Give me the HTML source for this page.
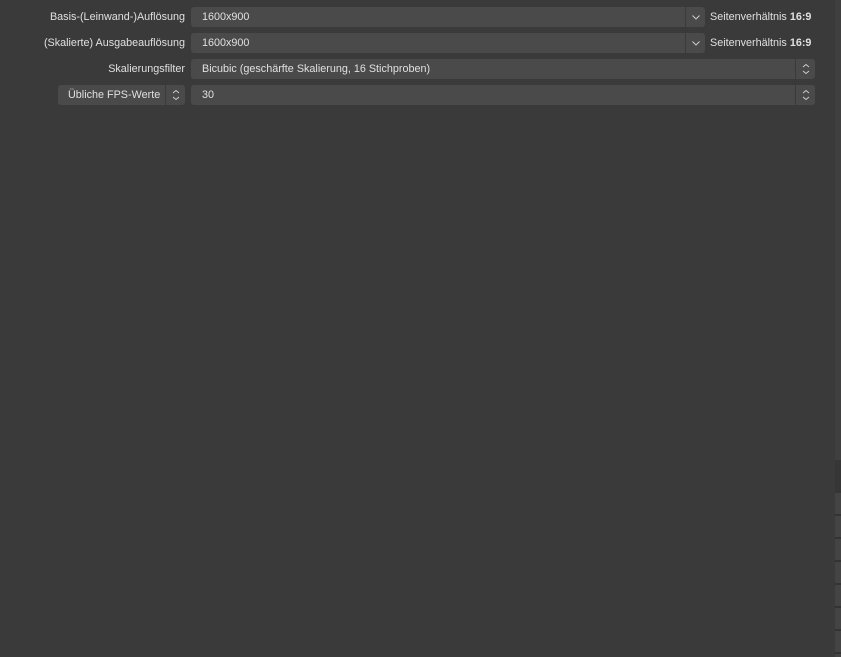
<!DOCTYPE html><html><head><style>
body{margin:0;width:841px;height:657px;background:#3a3a3a;position:relative;overflow:hidden;font-family:"Liberation Sans",sans-serif;font-size:10.8px;color:#e0e0e0}
.a{position:absolute}
.lbl{position:absolute;right:656px;text-align:right;white-space:nowrap;line-height:20px}
.f{position:absolute;background:#4a4a4a;border-radius:3px;height:20px;line-height:20px;padding-left:11px;box-sizing:border-box}
.btn{position:absolute;top:0;right:0;width:20px;height:20px;border-left:1px solid #3a3a3a;box-sizing:border-box}
svg{position:absolute;left:5px;top:4px}
</style></head><body>
<div class="lbl" style="top:7px">Basis-(Leinwand-)Auflösung</div>
<div class="f" style="left:191px;top:7px;width:514px">1600x900<div class="btn"><svg width="10" height="12"><path d="M1.5 4.5L5 8L8.5 4.5" stroke="#ccc" fill="none"/></svg></div></div>
<div class="a" style="left:710px;top:7px;line-height:20px">Seitenverhältnis <b>16:9</b></div>
<div class="lbl" style="top:33px">(Skalierte) Ausgabeauflösung</div>
<div class="f" style="left:191px;top:33px;width:514px">1600x900<div class="btn"><svg width="10" height="12"><path d="M1.5 4.5L5 8L8.5 4.5" stroke="#ccc" fill="none"/></svg></div></div>
<div class="a" style="left:710px;top:33px;line-height:20px">Seitenverhältnis <b>16:9</b></div>
<div class="lbl" style="top:59px">Skalierungsfilter</div>
<div class="f" style="left:191px;top:59px;width:624px">Bicubic (geschärfte Skalierung, 16 Stichproben)<div class="btn"><svg width="10" height="12"><path d="M2 4L5 1.5L8 4M2 8L5 10.5L8 8" stroke="#ccc" fill="none"/></svg></div></div>
<div class="f" style="left:58px;top:85px;width:127px;padding-left:10px">Übliche FPS-Werte<div class="btn"><svg width="10" height="12"><path d="M2 4L5 1.5L8 4M2 8L5 10.5L8 8" stroke="#ccc" fill="none"/></svg></div></div>
<div class="f" style="left:191px;top:85px;width:624px">30<div class="btn"><svg width="10" height="12"><path d="M2 4L5 1.5L8 4M2 8L5 10.5L8 8" stroke="#ccc" fill="none"/></svg></div></div>
<div class="a" style="left:835px;top:0;width:6px;height:657px;background:#3f3f3f"></div>
<div class="a" style="left:835px;top:460px;width:6px;height:33px;background:#363636"></div>
<div class="a" style="left:835px;top:493px;width:6px;height:164px;background:repeating-linear-gradient(#444 0 21px,#333 21px 23px)"></div>
</body></html>
